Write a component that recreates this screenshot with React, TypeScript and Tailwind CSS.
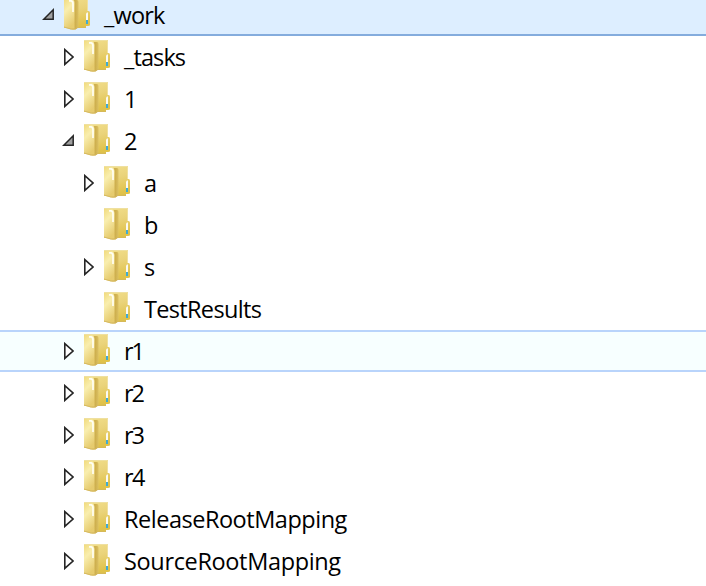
type Item = {
  label: string;
  level: number;
  state: "open" | "closed" | "none";
  tracking: string;
  row?: string;
};

const items: Item[] = [
  { label: "_work", level: 0, state: "open", tracking: "tracking-[-0.8px]", row: "bg-[#ddeeff] border-[#84acdd]" },
  { label: "_tasks", level: 1, state: "closed", tracking: "tracking-[-0.88px]" },
  { label: "1", level: 1, state: "closed", tracking: "tracking-normal" },
  { label: "2", level: 1, state: "open", tracking: "tracking-normal" },
  { label: "a", level: 2, state: "closed", tracking: "tracking-normal" },
  { label: "b", level: 2, state: "none", tracking: "tracking-normal" },
  { label: "s", level: 2, state: "closed", tracking: "tracking-normal" },
  { label: "TestResults", level: 2, state: "none", tracking: "tracking-[-0.67px]" },
  { label: "r1", level: 1, state: "closed", tracking: "tracking-[-2px]", row: "bg-[#f7ffff] border-[#b9d4fb]" },
  { label: "r2", level: 1, state: "closed", tracking: "tracking-[-2px]" },
  { label: "r3", level: 1, state: "closed", tracking: "tracking-[-2px]" },
  { label: "r4", level: 1, state: "closed", tracking: "tracking-[-1.5px]" },
  { label: "ReleaseRootMapping", level: 1, state: "closed", tracking: "tracking-[-0.48px]" },
  { label: "SourceRootMapping", level: 1, state: "closed", tracking: "tracking-[-0.35px]" },
];

const indents = ["pl-[42px]", "pl-[62px]", "pl-[82px]"];

function Arrow({ state }: { state: Item["state"] }) {
  return (
    <svg width="12" height="18" viewBox="0 0 12 18" className="shrink-0">
      {state === "closed" && (
        <path d="M2.8 1.6V16.4L11 9Z" fill="#fff" stroke="#262626" strokeWidth="1.6" />
      )}
      {state === "open" && (
        <path d="M11.2 3.8V13.2H1.8Z" fill="#a0a0a0" stroke="#262626" strokeWidth="1.5" />
      )}
    </svg>
  );
}

function Folder() {
  return (
    <svg width="26" height="32" viewBox="0 0 26 32" className="shrink-0">
      <defs>
        <linearGradient id="back" x1="0" y1="0" x2="0.3" y2="1">
          <stop offset="0" stopColor="#f3e08d" />
          <stop offset="0.5" stopColor="#ead37a" />
          <stop offset="1" stopColor="#e0c24a" />
        </linearGradient>
        <linearGradient id="front" x1="0" y1="0" x2="0.35" y2="1">
          <stop offset="0" stopColor="#f1db7e" />
          <stop offset="0.4" stopColor="#f9eeae" />
          <stop offset="1" stopColor="#e6cb6e" />
        </linearGradient>
        <linearGradient id="spine" x1="0" y1="0" x2="1" y2="0">
          <stop offset="0" stopColor="#e0c366" />
          <stop offset="0.45" stopColor="#ccad4b" />
          <stop offset="1" stopColor="#dbc063" />
        </linearGradient>
      </defs>
      <path d="M0 0H24V13H25Q26 13.5 26 15V27Q26 28 24 28H22V30H0Z" fill="url(#back)" />
      <path d="M0 0.5H23.5V13" fill="none" stroke="#efe0a0" />
      <path d="M8 2H13Q14.5 2 14.5 4V29L11.5 31.5H8Z" fill="url(#spine)" />
      <path d="M0 1H8Q10.5 2 10.5 5V31.5H7L0 29.5Z" fill="url(#front)" />
      <path d="M5 2.8H7.2Q9 3.2 9 6V14" fill="none" stroke="#fffef4" strokeWidth="1.7" />
      <path d="M0 29L7 31L12 30.8L14 29.3H22" fill="none" stroke="#d3b55f" strokeWidth="0.9" />
      <path d="M22 15.5L23 14.5H24V26H22Z" fill="#fafaf4" />
      <path d="M22 22H24V26H22Z" fill="#3fabd5" />
    </svg>
  );
}

export default function App() {
  return (
    <div className="h-[586px] w-[706px] overflow-hidden bg-white font-['Open_Sans','Noto_Sans',sans-serif] text-[23.5px] leading-8 text-black">
      <div className="-mt-1.5 flex flex-col">
        {items.map((item) => (
          <div
            key={item.label}
            className={`flex h-[42px] shrink-0 items-start border-y-2 ${indents[item.level]} ${item.row ?? "border-transparent"}`}
          >
            <div className="mt-2.5 mr-2.5 flex">
              <Arrow state={item.state} />
            </div>
            <div className="mt-0.5 flex">
              <Folder />
            </div>
            <span className={`mt-[3px] ml-3.5 whitespace-nowrap ${item.tracking}`}>{item.label}</span>
          </div>
        ))}
      </div>
    </div>
  );
}
